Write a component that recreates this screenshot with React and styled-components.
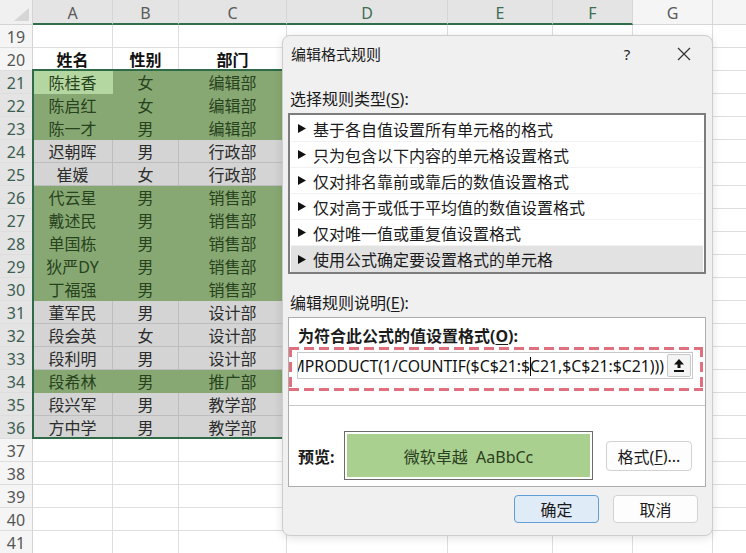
import React from 'react';
import styled, { createGlobalStyle } from 'styled-components';

const GlobalStyle = createGlobalStyle`
  html, body { margin: 0; padding: 0; background: #fff; overflow: hidden; }
  body { font-family: "Noto Sans", "Noto Sans CJK SC", sans-serif; }
  * { box-sizing: border-box; }
`;

const FONT = `"Noto Sans", "Noto Sans CJK SC", sans-serif`;

const Page = styled.div`
  position: relative;
  width: 746px;
  height: 553px;
  overflow: hidden;
  background: #fff;
  font-family: ${FONT};
`;

const Sheet = styled.div`
  display: grid;
  grid-template-columns: 33px 80px 66px 108px 161px 105px 80px 80px 80px;
  grid-template-rows: 25px repeat(23, 23px);
`;

const placed = p => `grid-row: ${p.$r}; grid-column: ${p.$c};`;

const Corner = styled.div`
  ${placed}
  position: relative;
  background: #f0f0f0;
  border-right: 1px solid #d4d4d4;
  border-bottom: 1px solid #d4d4d4;
  &::after {
    content: '';
    position: absolute;
    right: 3px;
    bottom: 3px;
    border-style: solid;
    border-width: 0 0 13px 15px;
    border-color: transparent transparent #d6d6d6 transparent;
  }
`;

const ColHead = styled.div`
  ${placed}
  text-align: center;
  font-size: 16px;
  line-height: 21px;
  padding-top: 3px;
  background: ${p => (p.$sel ? '#e4e4e4' : '#f5f5f5')};
  color: ${p => (p.$green ? '#3f6d55' : '#5a5a5a')};
  border-right: 1px solid #d6d6d6;
  border-bottom: ${p => (p.$sel ? '2px solid #2f6e4b' : '1px solid #d6d6d6')};
`;

const RowHead = styled.div`
  ${placed}
  text-align: center;
  font-size: 16px;
  line-height: 21px;
  padding-top: 2px;
  background: ${p => (p.$sel ? '#e4e4e4' : '#f5f5f5')};
  color: ${p => (p.$sel ? '#3d5d50' : '#555')};
  border-right: 1px solid #d4d4d4;
  border-bottom: 1px solid #dddddd;
`;

const TONES = {
  plain: { bg: '#ffffff', line: '#dedede', fg: '#111' },
  green: { bg: '#87a873', line: '#87a873', fg: '#27421c' },
  gray: { bg: '#d4d4d4', line: '#bdbdbd', fg: '#2c2c2c' },
  active: { bg: '#b4d6a0', line: '#b4d6a0', fg: '#27421c' },
};

const Cell = styled.div`
  ${placed}
  text-align: center;
  white-space: nowrap;
  overflow: hidden;
  font-size: 16px;
  line-height: 22px;
  padding-top: 1px;
  font-weight: ${p => (p.$bold ? 700 : 400)};
  background: ${p => TONES[p.$tone].bg};
  color: ${p => TONES[p.$tone].fg};
  border-right: 1px solid ${p => TONES[p.$tone].line};
  border-bottom: 1px solid ${p => TONES[p.$tone].line};
`;

const Selection = styled.div`
  grid-column: 2 / 8;
  grid-row: 4 / 20;
  margin: -2px 0 0 -1px;
  border: 2px solid #2f6b49;
  pointer-events: none;
`;

/* ---------- dialog ---------- */

const Dialog = styled.div`
  position: absolute;
  left: 282px;
  top: 35px;
  width: 431px;
  height: 501px;
  background: #f0f0f0;
  border: 1px solid #cdcdcd;
  border-radius: 8px;
  box-shadow: 0 2px 10px rgba(0, 0, 0, 0.12);
  display: flex;
  flex-direction: column;
  padding: 0 6px 0 5px;
  color: #1b1b1b;
  font-family: ${FONT};
`;

const TitleBar = styled.div`
  height: 36px;
  display: flex;
  align-items: center;
  padding-left: 3px;
`;

const Title = styled.div`
  flex: 1;
  font-size: 15px;
  line-height: 20px;
`;

const HelpBtn = styled.div`
  width: 40px;
  margin-right: 15px;
  text-align: center;
  font-size: 15px;
  color: #222;
`;

const CloseBtn = styled.div`
  width: 44px;
  display: flex;
  justify-content: center;
`;

const Label = styled.div`
  font-size: 16px;
  line-height: 22px;
  padding-left: 2px;
  margin-top: ${p => p.$mt}px;
`;

const U = styled.span`
  text-decoration: underline;
  text-underline-offset: 2px;
`;

const RuleList = styled.div`
  margin-top: 3px;
  background: #fff;
  border: 2px solid #7d7d7d;
  padding: 1px 1px 0 1px;
`;

const RuleItem = styled.div`
  height: 26px;
  display: flex;
  align-items: center;
  gap: 7px;
  padding-left: 7px;
  font-size: 16px;
  color: #1c1c1c;
  background: ${p => (p.$sel ? '#e2e2e2' : '#fff')};
  border-bottom: 1px solid ${p => (p.$sel ? '#e2e2e2' : '#f2f2f2')};
  &:last-child { border-bottom: none; }
`;

const EditBox = styled.div`
  margin-top: 3px;
  height: 170px;
  background: #fff;
  border: 1px solid #adadad;
  display: flex;
  flex-direction: column;
`;

const BoldLabel = styled.div`
  font-size: 16px;
  line-height: 22px;
  font-weight: 700;
  padding-left: 9px;
  margin-top: 7px;
  white-space: nowrap;
`;

const DASH = 'repeating-linear-gradient(90deg, #e0707e 0 10px, transparent 10px 15px)';
const DASHV = 'repeating-linear-gradient(180deg, #e0707e 0 10px, transparent 10px 15px)';

const DashedFrame = styled.div`
  height: 44px;
  margin-right: 2px;
  padding: 5px 10px 12px 8px;
  background-image: ${DASH}, ${DASH}, ${DASHV}, ${DASHV};
  background-size: 100% 3px, 100% 3px, 3px 100%, 3px 100%;
  background-position: 0 0, 0 100%, 0 0, 100% 0;
  background-repeat: no-repeat;
`;

const FormulaInput = styled.div`
  height: 27px;
  display: flex;
  align-items: center;
  background: #fff;
  border: 1px solid #c9c9c9;
`;

const FormulaText = styled.div`
  flex: 1;
  min-width: 0;
  overflow: hidden;
  display: flex;
  justify-content: flex-end;
  padding-right: 3px;
  white-space: nowrap;
  font-size: 15.8px;
  line-height: 22px;
  color: #111;
`;

const Caret = styled.span`
  display: inline-block;
  width: 1px;
  height: 19px;
  background: #000;
  vertical-align: -4px;
  margin-right: -1px;
`;

const UploadBtn = styled.div`
  width: 24px;
  height: 23px;
  margin-right: 1px;
  background: #f4f4f4;
  border: 1px solid #c8c8c8;
  border-radius: 2px;
  display: flex;
  align-items: center;
  justify-content: center;
`;

const Divider = styled.div`
  margin-top: 14px;
  height: 1px;
  background: #c8c8c8;
`;

const PreviewRow = styled.div`
  margin-top: 25px;
  height: 49px;
  display: flex;
  align-items: center;
  padding-left: 9px;
`;

const PreviewLabel = styled.div`
  width: 46px;
  font-size: 16px;
  font-weight: 700;
`;

const PreviewBox = styled.div`
  width: 249px;
  height: 49px;
  border: 1px solid #6b6b6b;
  box-shadow: inset 0 0 0 2px #fff;
  background: #a9d08e;
  display: flex;
  align-items: center;
  justify-content: center;
  font-size: 16px;
  color: #2b3f22;
  white-space: pre;
`;

const Button = styled.div`
  width: ${p => p.$w || 85}px;
  height: ${p => p.$h || 28}px;
  margin-left: ${p => p.$ml || 0}px;
  display: flex;
  align-items: center;
  justify-content: center;
  font-size: 16px;
  color: #1b1b1b;
  white-space: nowrap;
  border-radius: 4px;
  background: ${p => (p.$primary ? '#dfebf7' : '#fdfdfd')};
  border: 1px solid ${p => (p.$primary ? '#5f9ed6' : '#d2d2d2')};
`;

const ButtonRow = styled.div`
  margin-top: 8px;
  display: flex;
  justify-content: flex-end;
  gap: 14px;
  padding-right: 8px;
`;

const Arrow = () => (
  <svg width="8" height="9" viewBox="0 0 8 9">
    <path d="M0 0 L8 4.5 L0 9 Z" fill="#111" />
  </svg>
);

const UploadIcon = () => (
  <svg width="10" height="13" viewBox="0 0 10 13">
    <path d="M5 0 L10 5.5 L6.5 5.5 L6.5 9 L3.5 9 L3.5 5.5 L0 5.5 Z" fill="#111" />
    <rect x="0" y="11" width="10" height="2" fill="#111" />
  </svg>
);

const CloseIcon = () => (
  <svg width="14" height="14" viewBox="0 0 14 14">
    <path d="M1 1 L13 13 M13 1 L1 13" stroke="#333" strokeWidth="1.2" />
  </svg>
);

const DATA = [
  ['陈桂香', '女', '编辑部', true],
  ['陈启红', '女', '编辑部', true],
  ['陈一才', '男', '编辑部', true],
  ['迟朝晖', '男', '行政部', false],
  ['崔媛', '女', '行政部', false],
  ['代云星', '男', '销售部', true],
  ['戴述民', '男', '销售部', true],
  ['单国栋', '男', '销售部', true],
  ['狄严DY', '男', '销售部', true],
  ['丁福强', '男', '销售部', true],
  ['董军民', '男', '设计部', false],
  ['段会英', '女', '设计部', false],
  ['段利明', '男', '设计部', false],
  ['段希林', '男', '推广部', true],
  ['段兴军', '男', '教学部', false],
  ['方中学', '男', '教学部', false],
];

const COLS = ['A', 'B', 'C', 'D', 'E', 'F', 'G', 'H'];

const RULES = [
  '基于各自值设置所有单元格的格式',
  '只为包含以下内容的单元格设置格式',
  '仅对排名靠前或靠后的数值设置格式',
  '仅对高于或低于平均值的数值设置格式',
  '仅对唯一值或重复值设置格式',
  '使用公式确定要设置格式的单元格',
];

function SheetGrid() {
  const cells = [];
  cells.push(<Corner key="corner" $r={1} $c={1} />);
  COLS.forEach((c, ci) =>
    cells.push(
      <ColHead key={'h' + c} $r={1} $c={ci + 2} $sel={'ABCDEF'.includes(c)} $green={'DEF'.includes(c)}>
        {c}
      </ColHead>
    )
  );
  for (let n = 19; n <= 41; n++) {
    const r = n - 17;
    const sel = n >= 21 && n <= 36;
    cells.push(
      <RowHead key={'r' + n} $r={r} $c={1} $sel={sel}>
        {n}
      </RowHead>
    );
    const rec = sel ? DATA[n - 21] : null;
    COLS.forEach((c, ci) => {
      let tone = 'plain';
      let text = '';
      let bold = false;
      if (n === 20 && ci < 3) {
        text = ['姓名', '性别', '部门'][ci];
        bold = true;
      }
      if (rec && ci < 6) {
        tone = ci < 3 && rec[3] ? 'green' : 'gray';
        if (ci < 3) text = rec[ci];
        if (n === 21 && ci === 0) tone = 'active';
      }
      cells.push(
        <Cell key={n + c} $r={r} $c={ci + 2} $tone={tone} $bold={bold}>
          {text}
        </Cell>
      );
    });
  }
  return (
    <Sheet>
      {cells}
      <Selection />
    </Sheet>
  );
}

function RuleDialog() {
  return (
    <Dialog>
      <TitleBar>
        <Title>编辑格式规则</Title>
        <HelpBtn>?</HelpBtn>
        <CloseBtn>
          <CloseIcon />
        </CloseBtn>
      </TitleBar>
      <Label $mt={16}>
        选择规则类型(<U>S</U>):
      </Label>
      <RuleList>
        {RULES.map((r, i) => (
          <RuleItem key={r} $sel={i === RULES.length - 1}>
            <Arrow />
            {r}
          </RuleItem>
        ))}
      </RuleList>
      <Label $mt={18}>
        编辑规则说明(<U>E</U>):
      </Label>
      <EditBox>
        <BoldLabel>
          为符合此公式的值设置格式(<U>O</U>):
        </BoldLabel>
        <DashedFrame>
          <FormulaInput>
            <FormulaText>
              <span>
                =SUMPRODUCT(1/COUNTIF($C$21:$
                <Caret />
                C21,$C$21:$C21)))
              </span>
            </FormulaText>
            <UploadBtn>
              <UploadIcon />
            </UploadBtn>
          </FormulaInput>
        </DashedFrame>
        <Divider />
        <PreviewRow>
          <PreviewLabel>预览:</PreviewLabel>
          <PreviewBox>微软卓越  AaBbCc</PreviewBox>
          <Button $w={86} $h={30} $ml={13}>
            格式(<U>F</U>)...
          </Button>
        </PreviewRow>
      </EditBox>
      <ButtonRow>
        <Button $primary>确定</Button>
        <Button>取消</Button>
      </ButtonRow>
    </Dialog>
  );
}

export default function App() {
  return (
    <Page>
      <GlobalStyle />
      <SheetGrid />
      <RuleDialog />
    </Page>
  );
}
